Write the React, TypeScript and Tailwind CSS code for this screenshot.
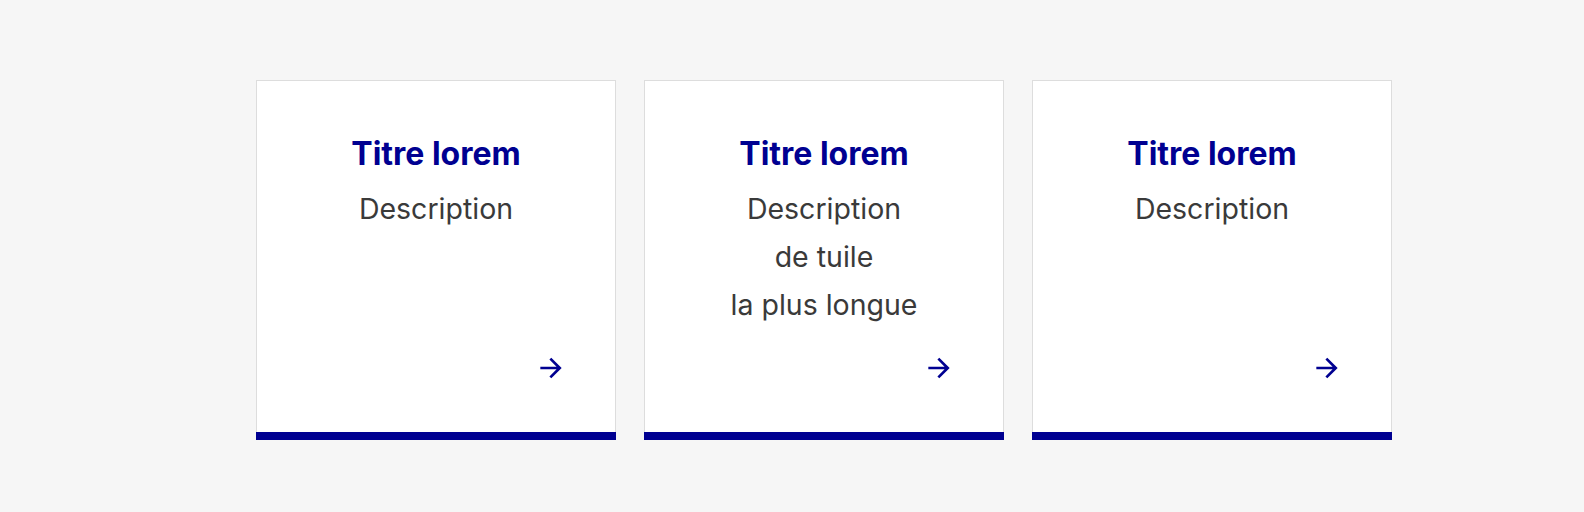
import React from "react";

interface TileProps {
  title: string;
  lines: string[];
}

function ArrowRight() {
  return (
    <svg viewBox="0 0 24 24" className="w-8 h-8" fill="#000091" aria-hidden="true">
      <path d="M16.172 11l-5.364-5.364 1.414-1.414L20 12l-7.778 7.778-1.414-1.414L16.172 13H4v-2z" />
    </svg>
  );
}

function Tile({ title, lines }: TileProps) {
  return (
    <div className="w-[360px] h-[360px] flex flex-col bg-white">
      <div className="flex-1 flex flex-col border-t border-x border-[#dddddd] p-12">
        <h3 className="mt-[5px] text-[32px] leading-[40px] font-bold text-[#000091] text-center">{title}</h3>
        <p className="mt-[11px] text-[28.5px] leading-[48px] text-[#3a3a3a] text-center">
          {lines.map((l, i) => (
            <React.Fragment key={i}>
              {i > 0 && <br />}
              {l}
            </React.Fragment>
          ))}
        </p>
        <div className="flex-1" />
        <div className="self-end">
          <ArrowRight />
        </div>
      </div>
      <div className="h-2 bg-[#000091]" />
    </div>
  );
}

export default function App() {
  return (
    <div
      className="h-[512px] bg-[#f6f6f6] pt-20 pl-[256px] flex items-start gap-7"
      style={{ fontFamily: "Inter, 'Noto Sans', sans-serif" }}
    >
      <Tile title="Titre lorem" lines={["Description"]} />
      <Tile title="Titre lorem" lines={["Description", "de tuile", "la plus longue"]} />
      <Tile title="Titre lorem" lines={["Description"]} />
    </div>
  );
}
